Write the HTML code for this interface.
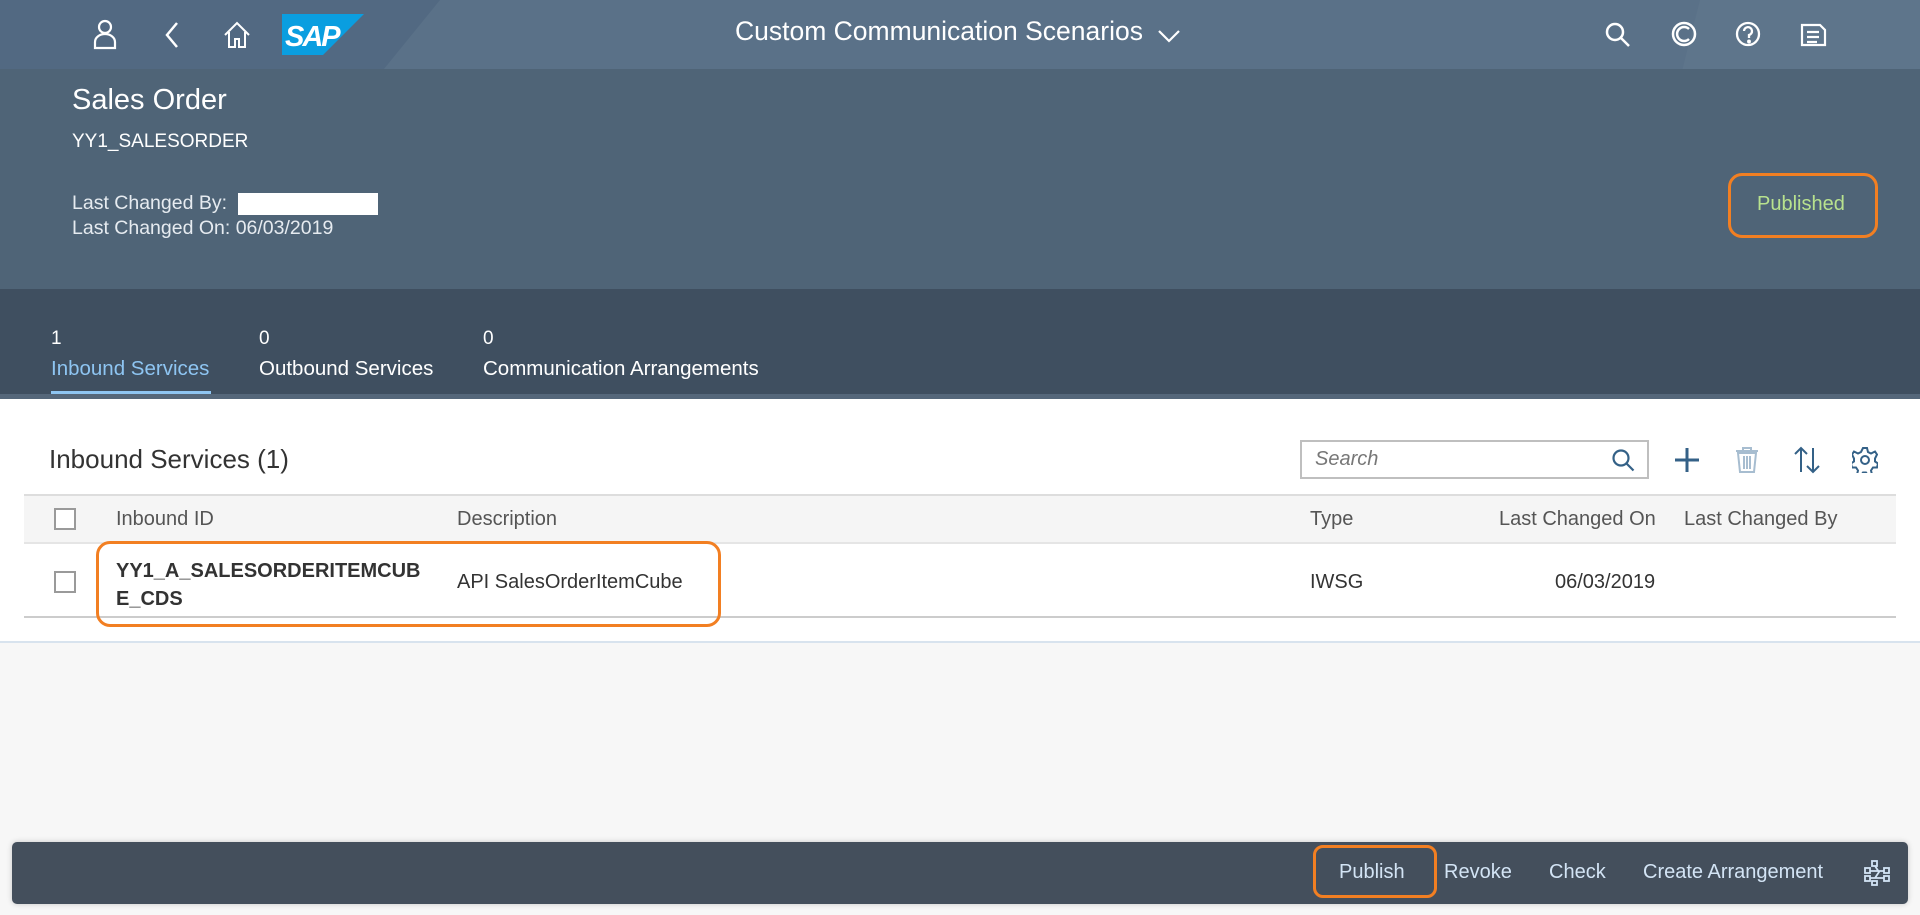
<!DOCTYPE html>
<html><head><meta charset="utf-8"><style>
*{margin:0;padding:0;box-sizing:border-box}
body{width:1920px;height:915px;overflow:hidden;background:#f7f7f7;font-family:"Liberation Sans",Arial,sans-serif;position:relative}
.abs{position:absolute}
.shell{left:0;top:0;width:1920px;height:69px;background:#5a7188}
.hdr{left:0;top:69px;width:1920px;height:220px;background:#4f6477}
.tabs{left:0;top:289px;width:1920px;height:105px;background:#3f4f60}
.w{color:#fff}
.sec{left:0;top:399px;width:1920px;height:244px;background:#fff;border-bottom:2px solid #d8e3ee}
.orange{border:3px solid #f27f22;border-radius:14px}
.th{color:#555;font-size:20px}
.td{color:#333;font-size:20px}
</style></head><body>
<div class="abs shell"></div>
<svg class="abs" style="left:0;top:0" width="1920" height="394"><polygon points="0,0 440,0 120,394 0,394" fill="#3d5570" opacity="0.25"/><polygon points="1700,0 1920,0 1920,394 1600,394" fill="#7a90a8" opacity="0.12"/></svg>
<div class="abs hdr"></div>
<div class="abs tabs"></div>
<svg class="abs" style="left:90px;top:18px" width="30" height="32" viewBox="0 0 30 32" fill="none" stroke="#fff" stroke-width="2.2"><circle cx="15" cy="9" r="6"/><path d="M5 30v-6a10 8 0 0 1 20 0v6z"/></svg>
<svg class="abs" style="left:162px;top:20px" width="20" height="30" fill="none" stroke="#fff" stroke-width="2.5"><path d="M15 3L5 15l10 12"/></svg>
<svg class="abs" style="left:222px;top:20px" width="30" height="30" fill="none" stroke="#fff" stroke-width="2"><path d="M3 15L15 3l12 12M7 12v15h6v-8h4v8h6V12"/></svg>
<svg class="abs" style="left:282px;top:14px" width="82" height="41"><polygon points="0,0 82,0 41,41 0,41" fill="#0a9ee0"/><text x="3" y="32" font-family="Liberation Sans" font-weight="bold" font-style="italic" font-size="29" fill="#fff" letter-spacing="-2">SAP</text></svg>
<div class="abs w" style="left:735px;top:16px;font-size:26.5px">Custom Communication Scenarios</div>
<svg class="abs" style="left:1157px;top:28px" width="24" height="16" fill="none" stroke="#fff" stroke-width="2.2"><path d="M2 3l10 10 10-10"/></svg>
<svg class="abs" style="left:1604px;top:21px" width="28" height="28" fill="none" stroke="#fff" stroke-width="2.5"><circle cx="11" cy="11" r="8"/><path d="M17 17l8 8"/></svg>
<svg class="abs" style="left:1670px;top:20px" width="28" height="28" fill="none" stroke="#fff" stroke-width="2.5"><circle cx="14" cy="14" r="11"/><path d="M19 9a7 7 0 1 0 0 10"/></svg>
<svg class="abs" style="left:1734px;top:20px" width="28" height="28" fill="none" stroke="#fff" stroke-width="2.3"><circle cx="14" cy="14" r="11"/><path d="M10 11a4 4 0 1 1 5 4v3"/><circle cx="15" cy="21.5" r=".8" fill="#fff"/></svg>
<svg class="abs" style="left:1800px;top:22px" width="28" height="26" fill="none" stroke="#fff" stroke-width="2.2"><path d="M2 3h18l5 5v15H2zM7 10h12M7 15h12M7 20h10"/></svg>
<div class="abs w" style="left:72px;top:84px;font-size:29px">Sales Order</div>
<div class="abs w" style="left:72px;top:131px;font-size:19px">YY1_SALESORDER</div>
<div class="abs" style="left:72px;top:192px;font-size:19.5px;color:#e6ebf0">Last Changed By:</div>
<div class="abs" style="left:238px;top:193px;width:140px;height:22px;background:#fff"></div>
<div class="abs" style="left:72px;top:217px;font-size:19.5px;color:#e6ebf0">Last Changed On: 06/03/2019</div>
<div class="abs orange" style="left:1728px;top:173px;width:150px;height:65px"></div>
<div class="abs" style="left:1757px;top:193px;font-size:20px;color:#b8e28e">Published</div>
<div class="abs w" style="left:51px;top:328px;font-size:19px">1</div>
<div class="abs" style="left:51px;top:357px;font-size:20.5px;color:#8ec5f2">Inbound Services</div>
<div class="abs" style="left:51px;top:391px;width:160px;height:4px;background:#8ec5f2"></div>
<div class="abs w" style="left:259px;top:328px;font-size:19px">0</div>
<div class="abs w" style="left:259px;top:357px;font-size:20.5px">Outbound Services</div>
<div class="abs w" style="left:483px;top:328px;font-size:19px">0</div>
<div class="abs w" style="left:483px;top:357px;font-size:20.5px">Communication Arrangements</div>
<div class="abs" style="left:0;top:394px;width:1920px;height:5px;background:#55677a"></div>
<div class="abs sec"></div>
<div class="abs" style="left:49px;top:444px;font-size:26px;color:#333">Inbound Services (1)</div>
<div class="abs" style="left:1300px;top:440px;width:349px;height:39px;border:2px solid #bfbfbf;background:#fff"></div>
<div class="abs" style="left:1315px;top:448px;font-size:20px;color:#777;font-style:italic">Search</div>
<svg class="abs" style="left:1611px;top:448px" width="26" height="26" fill="none" stroke="#346187" stroke-width="2.2"><circle cx="10" cy="10" r="7.5"/><path d="M15.5 15.5l7 7"/></svg>
<svg class="abs" style="left:1674px;top:447px" width="26" height="26" stroke="#346187" stroke-width="3"><path d="M13 1v24M1 13h24"/></svg>
<svg class="abs" style="left:1735px;top:447px" width="24" height="26" fill="none" stroke="#a7bdd0" stroke-width="2"><path d="M1 4h22M8 4V1h8v3M3 6h18l-2 19H5zM9 9v13M12 9v13M15 9v13"/></svg>
<svg class="abs" style="left:1793px;top:446px" width="28" height="28" fill="none" stroke="#346187" stroke-width="2"><path d="M8 26V2M2 8l6-6 6 6M20 2v24M14 20l6 6 6-6"/></svg>
<svg class="abs" style="left:1852px;top:447px" width="26" height="26" fill="none" stroke="#346187" stroke-width="2"><circle cx="13" cy="13" r="4"/><path d="M11 1h4l1 4 3 1.5 4-2 2 3-2 4v3l3 2-1 4-4 0-2 3 1 4-4 1-2-3h-3l-2 3-4-1 1-4-2-3-4 0-1-4 3-2v-3l-2-4 2-3 4 2 3-1.5z"/></svg>
<div class="abs" style="left:24px;top:494px;width:1872px;height:50px;background:#f5f5f5;border-top:2px solid #ddd;border-bottom:2px solid #e5e5e5"></div>
<div class="abs" style="left:54px;top:508px;width:22px;height:22px;border:2px solid #9a9a9a;background:#fff"></div>
<div class="abs th" style="left:116px;top:508px">Inbound ID</div>
<div class="abs th" style="left:457px;top:508px">Description</div>
<div class="abs th" style="left:1310px;top:508px">Type</div>
<div class="abs th" style="left:1499px;top:508px">Last Changed On</div>
<div class="abs th" style="left:1684px;top:508px">Last Changed By</div>
<div class="abs" style="left:54px;top:571px;width:22px;height:22px;border:2px solid #9a9a9a;background:#fff"></div>
<div class="abs td" style="left:116px;top:557px;font-weight:bold;line-height:28px;color:#333">YY1_A_SALESORDERITEMCUB<br>E_CDS</div>
<div class="abs td" style="left:457px;top:571px">API SalesOrderItemCube</div>
<div class="abs td" style="left:1310px;top:571px">IWSG</div>
<div class="abs td" style="left:1555px;top:571px">06/03/2019</div>
<div class="abs" style="left:24px;top:616px;width:1872px;height:2px;background:#ccc"></div>
<div class="abs orange" style="left:96px;top:541px;width:625px;height:86px"></div>
<div class="abs" style="left:12px;top:842px;width:1896px;height:62px;background:#444f5c;border-radius:5px;box-shadow:0 0 6px rgba(0,0,0,.2)"></div>
<div class="abs" style="left:1339px;top:861px;font-size:20px;color:#d3e4f5">Publish</div>
<div class="abs" style="left:1444px;top:861px;font-size:20px;color:#d3e4f5">Revoke</div>
<div class="abs" style="left:1549px;top:861px;font-size:20px;color:#d3e4f5">Check</div>
<div class="abs" style="left:1643px;top:861px;font-size:20px;color:#d3e4f5">Create Arrangement</div>
<svg class="abs" style="left:1864px;top:860px" width="26" height="26" fill="none" stroke="#d3e4f5" stroke-width="1.8"><rect x="8" y="1" width="5" height="5"/><rect x="1" y="8" width="5" height="5"/><rect x="20" y="8" width="5" height="5"/><rect x="1" y="16" width="5" height="5"/><rect x="20" y="16" width="5" height="5"/><rect x="8" y="21" width="5" height="4"/><path d="M11 6l4 6-4 6M6 11h14M6 18h14"/></svg>
<div class="abs orange" style="left:1313px;top:845px;width:124px;height:53px;border-radius:10px"></div>
</body></html>
